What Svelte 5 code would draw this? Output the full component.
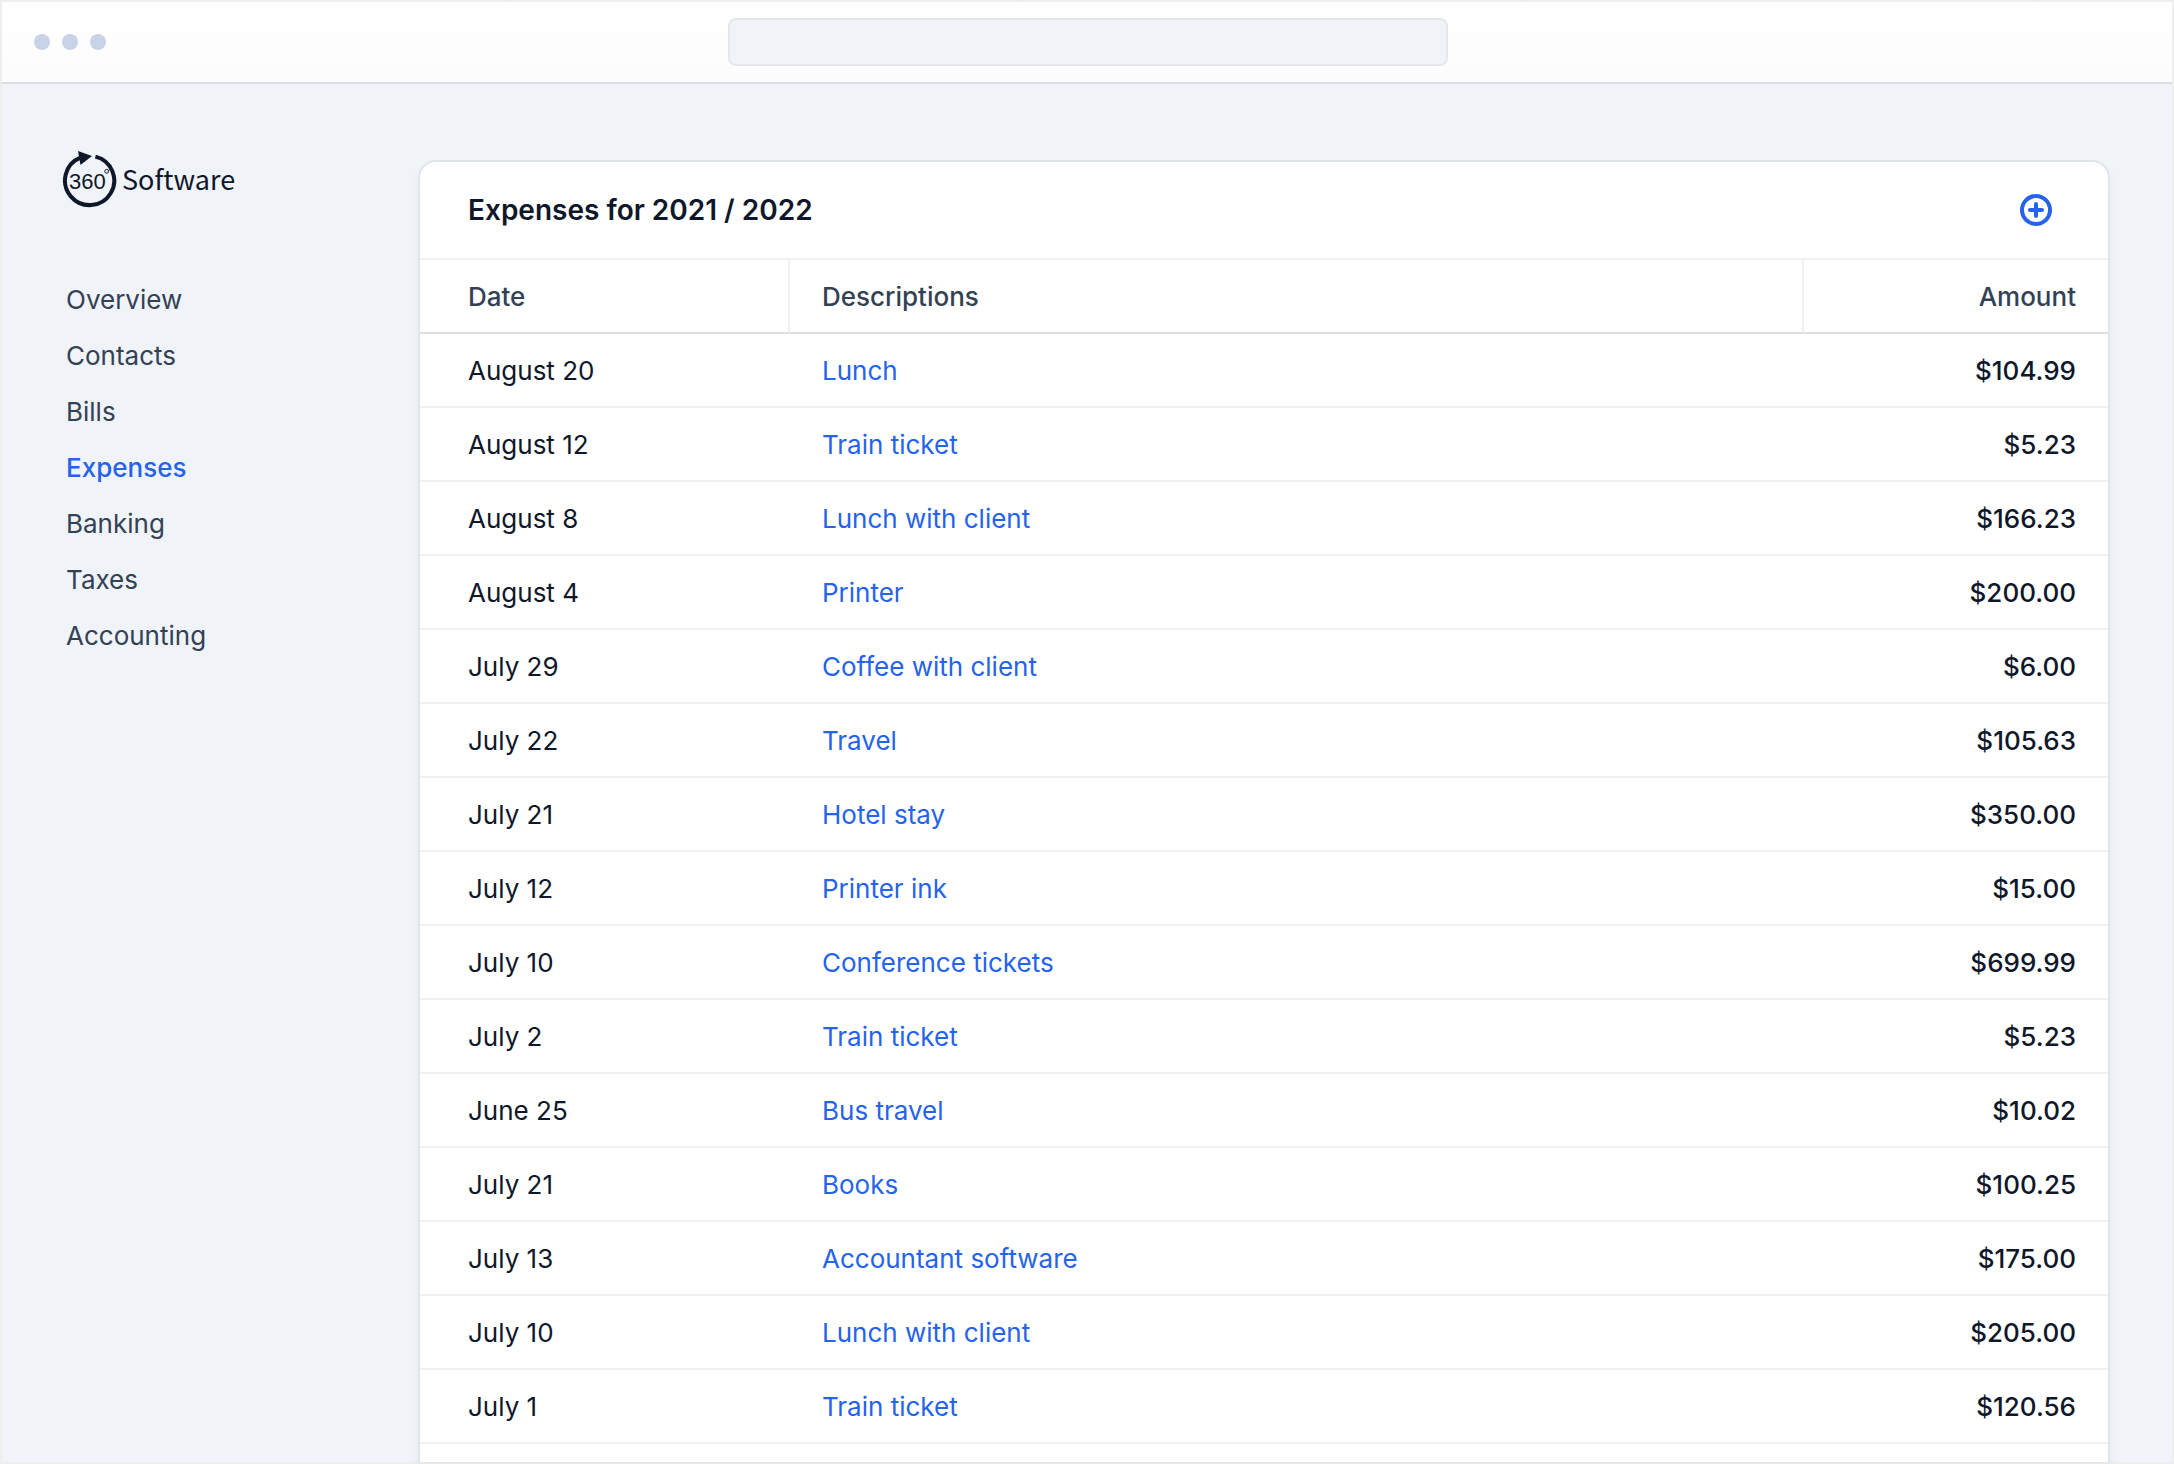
<script>
  const navItems = ["Overview", "Contacts", "Bills", "Expenses", "Banking", "Taxes", "Accounting"];
  let current = $state("Expenses");
  let address = $state("");

  const expenses = [
    { date: "August 20", description: "Lunch", amount: 104.99 },
    { date: "August 12", description: "Train ticket", amount: 5.23 },
    { date: "August 8", description: "Lunch with client", amount: 166.23 },
    { date: "August 4", description: "Printer", amount: 200 },
    { date: "July 29", description: "Coffee with client", amount: 6 },
    { date: "July 22", description: "Travel", amount: 105.63 },
    { date: "July 21", description: "Hotel stay", amount: 350 },
    { date: "July 12", description: "Printer ink", amount: 15 },
    { date: "July 10", description: "Conference tickets", amount: 699.99 },
    { date: "July 2", description: "Train ticket", amount: 5.23 },
    { date: "June 25", description: "Bus travel", amount: 10.02 },
    { date: "July 21", description: "Books", amount: 100.25 },
    { date: "July 13", description: "Accountant software", amount: 175 },
    { date: "July 10", description: "Lunch with client", amount: 205 },
    { date: "July 1", description: "Train ticket", amount: 120.56 },
  ];

  const formatAmount = (amount) => "$" + amount.toFixed(2);
</script>

<div class="window">
  <header class="topbar">
    <div class="dots">
      <span></span>
      <span></span>
      <span></span>
    </div>
    <input class="address" type="text" aria-label="Address" bind:value={address} />
  </header>

  <div class="body">
    <aside class="sidebar">
      <a class="logo" href="#home">
        <svg width="56" height="60" viewBox="0 0 56 60" aria-hidden="true">
          <path
            d="M33.4 8.6 A24.6 24.6 0 1 1 18.4 9.7"
            fill="none"
            stroke="#0f172a"
            stroke-width="4"
          />
          <path d="M16 3 L30 8 L18.5 17 Z" fill="#0f172a" />
          <text x="7" y="41" font-size="22" fill="#0f172a">360</text>
          <circle cx="44.7" cy="23.3" r="1.9" fill="none" stroke="#0f172a" />
        </svg>
        <span>Software</span>
      </a>

      <nav>
        {#each navItems as item}
          <a
            href="#{item.toLowerCase()}"
            class:active={item === current}
            aria-current={item === current ? "page" : undefined}
            onclick={() => (current = item)}
          >
            {item}
          </a>
        {/each}
      </nav>
    </aside>

    <main class="card">
      <div class="card-header">
        <h1>Expenses for 2021 / 2022</h1>
        <button type="button" aria-label="Add expense">
          <svg width="32" height="32" viewBox="0 0 32 32" fill="none" stroke="#2563eb" stroke-width="4">
            <circle cx="16" cy="16" r="14" />
            <path d="M16 10v12M10 16h12" stroke-linecap="round" />
          </svg>
        </button>
      </div>

      <table>
        <thead>
          <tr>
            <th class="date" scope="col">Date</th>
            <th scope="col">Descriptions</th>
            <th class="amount" scope="col">Amount</th>
          </tr>
        </thead>
        <tbody>
          {#each expenses as expense}
            <tr>
              <td class="date">{expense.date}</td>
              <td><a href="#expense">{expense.description}</a></td>
              <td class="amount">{formatAmount(expense.amount)}</td>
            </tr>
          {/each}
        </tbody>
      </table>
    </main>
  </div>
</div>

<style>
  :global(body) {
    margin: 0;
  }

  .window {
    display: flex;
    flex-direction: column;
    box-sizing: border-box;
    min-height: 100vh;
    border: 2px solid #eeeeee;
    background: #f0f3f8;
    color: #0f172a;
    font-family: Inter, "Liberation Sans", sans-serif;
    font-size: 26px;
    line-height: 40px;
  }

  a {
    color: #2563eb;
    text-decoration: none;
  }

  .topbar {
    display: grid;
    grid-template-columns: 1fr 720px 1fr;
    align-items: center;
    padding: 16px 30px 16px 32px;
    border-bottom: 2px solid #dadfe4;
    background: linear-gradient(#ffffff, #fcfcfc);
  }

  .dots {
    display: flex;
    gap: 12px;
  }

  .dots span {
    width: 16px;
    height: 16px;
    border-radius: 50%;
    background: #c8d3e8;
  }

  .address {
    box-sizing: border-box;
    height: 48px;
    padding: 0 16px;
    border: 2px solid #e4e8ed;
    border-radius: 8px;
    background: #f0f3f8;
    color: #334155;
    font: inherit;
  }

  .body {
    display: flex;
    flex: 1;
    padding: 76px 62px 0 0;
  }

  .sidebar {
    box-sizing: border-box;
    flex: none;
    width: 416px;
    padding-left: 60px;
  }

  .logo {
    display: flex;
    align-items: center;
    gap: 4px;
    height: 60px;
    margin-top: -12px;
    color: #0f172a;
    font-family: "Noto Sans CJK SC", sans-serif;
    font-size: 27px;
  }

  .logo span {
    padding-top: 2px;
  }

  .logo svg {
    font-family: "Liberation Sans", sans-serif;
  }

  nav {
    display: flex;
    flex-direction: column;
    padding: 64px 4px 0;
  }

  nav a {
    padding: 8px 0;
    color: #334155;
  }

  nav a.active {
    color: #2563eb;
    font-weight: 500;
  }

  .card {
    flex: 1;
    border: 2px solid #e0e5ec;
    border-bottom: 0;
    border-radius: 18px 18px 0 0;
    background: #ffffff;
    box-shadow: 0 8px 12px rgba(15, 23, 42, 0.04);
  }

  .card-header {
    display: flex;
    align-items: center;
    justify-content: space-between;
    padding: 28px 56px 28px 48px;
    border-bottom: 2px solid #f0f0f0;
  }

  h1 {
    margin: 0;
    font-size: 28px;
    font-weight: 600;
  }

  button {
    display: flex;
    padding: 0;
    border: 0;
    background: none;
    cursor: pointer;
  }

  table {
    width: 100%;
    border-collapse: separate;
    border-spacing: 0;
    table-layout: fixed;
  }

  th,
  td {
    padding: 17px 32px 15px;
    border-bottom: 2px solid #f0f0f0;
    text-align: left;
  }

  th {
    border-right: 2px solid #f0f0f0;
    border-bottom-color: #dedfe1;
    color: #334155;
    font-weight: 500;
  }

  th:last-child {
    border-right: 0;
  }

  .date {
    width: 288px;
    padding-left: 48px;
  }

  .amount {
    width: 240px;
    text-align: right;
  }

  td.amount {
    font-weight: 500;
  }
</style>
